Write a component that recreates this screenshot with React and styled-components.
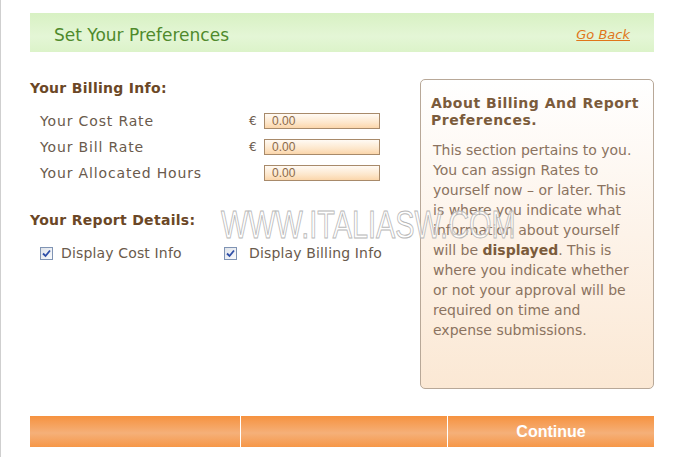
import React from 'react'
import styled, { createGlobalStyle } from 'styled-components'

const GlobalStyle = createGlobalStyle`
  html, body {
    margin: 0;
    padding: 0;
    background: #fff;
  }
  body {
    font-family: "DejaVu Sans", Verdana, sans-serif;
  }
`

const Page = styled.div`
  position: relative;
  box-sizing: border-box;
  width: 674px;
  height: 457px;
  border-left: 1px solid #cfcfcf;
  padding: 13px 20px 0 29px;
  overflow: hidden;
`

const Header = styled.div`
  box-sizing: border-box;
  height: 39px;
  display: flex;
  align-items: center;
  justify-content: space-between;
  padding: 4px 24px 0;
  background: linear-gradient(to bottom, #d8f1c3 0%, #e4f6d6 60%, #dcf3c9 100%);
`

const Title = styled.h1`
  margin: 0;
  font-size: 17px;
  font-weight: normal;
  color: #4f8a2c;
`

const BackLink = styled.a`
  font-size: 13px;
  font-style: italic;
  color: #e0761a;
  text-decoration: underline;
  cursor: pointer;
`

const Body = styled.div`
  display: flex;
  justify-content: space-between;
  margin-top: 27px;
`

const LeftCol = styled.div`
  width: 370px;
  padding-top: 1px;
`

const SectionTitle = styled.h2`
  margin: ${p => p.$top || 0}px 0 0;
  font-size: 14px;
  font-weight: bold;
  letter-spacing: 0.3px;
  line-height: 16px;
  color: #6b4726;
`

const Rows = styled.div`
  margin-top: 12px;
  padding-left: 10px;
`

const Row = styled.div`
  display: grid;
  grid-template-columns: 209px 15px 116px;
  align-items: center;
  height: 26px;
`

const Label = styled.span`
  font-size: 14px;
  letter-spacing: 0.85px;
  color: #6a5a4c;
`

const Currency = styled.span`
  font-size: 12px;
  color: #6a5a4c;
`

const Input = styled.input`
  box-sizing: border-box;
  width: 116px;
  height: 16px;
  margin: 0;
  padding: 0 0 0 7px;
  border: 1px solid #a88a6a;
  background: linear-gradient(to bottom, #fffaf4 0%, #fde7cc 60%, #fbd6ab 100%);
  font-family: "Liberation Sans", Arial, sans-serif;
  font-size: 12px;
  color: #8a6a4a;
  outline: none;
`

const Checks = styled.div`
  display: flex;
  margin-top: 17px;
  padding-left: 10px;
`

const CheckItem = styled.label`
  display: flex;
  align-items: center;
  gap: ${p => p.$gap}px;
  width: ${p => p.$w}px;
  font-size: 14px;
  letter-spacing: 0.15px;
  color: #6a5a4c;
`

const Box = styled.span`
  box-sizing: border-box;
  width: 13px;
  height: 13px;
  border: 1px solid #8094b4;
  background: linear-gradient(135deg, #dfe3ea 0%, #fafbfd 100%);
  display: flex;
  align-items: center;
  justify-content: center;
`

const Panel = styled.div`
  box-sizing: border-box;
  width: 234px;
  height: 310px;
  border: 1px solid #b8a898;
  border-radius: 5px;
  padding: 15px 8px 0 10px;
  background: linear-gradient(to bottom, #ffffff 0%, #fdf3e9 50%, #fbe8d4 100%);
`

const PanelTitle = styled.h3`
  margin: 0;
  font-size: 14px;
  font-weight: bold;
  line-height: 17px;
  letter-spacing: 0.5px;
  color: #7b5b3b;
`

const PanelText = styled.p`
  width: 203px;
  margin: 11px 0 0 2px;
  font-size: 14px;
  line-height: 20px;
  color: #8b7360;

  b {
    color: #7b5b3b;
  }
`

const Footer = styled.div`
  display: grid;
  grid-template-columns: 210px 206px 1fr;
  gap: 1px;
  margin-top: 27px;
  height: 31px;
`

const FooterCell = styled.div`
  display: flex;
  align-items: center;
  justify-content: center;
  background: linear-gradient(to bottom, #f6923f 0%, #f5b079 55%, #f69748 100%);
  font-family: "Liberation Sans", Arial, sans-serif;
  font-size: 16px;
  font-weight: bold;
  color: #fff;
`

const Watermark = styled.div`
  position: absolute;
  left: 220px;
  top: 203px;
  width: 296px;
  font-family: "Liberation Sans", Arial, sans-serif;
  font-size: 39px;
  line-height: 44px;
  white-space: nowrap;
  color: rgba(255, 255, 255, 0.6);
  -webkit-text-stroke: 1px #b8b8b8;
  transform: scaleX(0.74);
  transform-origin: left center;
  pointer-events: none;
`

const Check = () => (
  <Box>
    <svg width="9" height="9" viewBox="0 0 9 9">
      <path d="M1 4.5 L3.5 7 L8 1.5" fill="none" stroke="#2f4fa8" strokeWidth="1.8" />
    </svg>
  </Box>
)

const rates = [
  { label: 'Your Cost Rate', euro: true },
  { label: 'Your Bill Rate', euro: true },
  { label: 'Your Allocated Hours', euro: false },
]

export default function App() {
  return (
    <Page>
      <GlobalStyle />
      <Header>
        <Title>Set Your Preferences</Title>
        <BackLink>Go Back</BackLink>
      </Header>
      <Body>
        <LeftCol>
          <SectionTitle>Your Billing Info:</SectionTitle>
          <Rows>
            {rates.map(r => (
              <Row key={r.label}>
                <Label>{r.label}</Label>
                <Currency>{r.euro ? '€' : ''}</Currency>
                <Input defaultValue="0.00" />
              </Row>
            ))}
          </Rows>
          <SectionTitle $top={26}>Your Report Details:</SectionTitle>
          <Checks>
            <CheckItem $w={184} $gap={8}><Check />Display Cost Info</CheckItem>
            <CheckItem $w={170} $gap={12}><Check />Display Billing Info</CheckItem>
          </Checks>
        </LeftCol>
        <Panel>
          <PanelTitle>About Billing And Report Preferences.</PanelTitle>
          <PanelText>
            This section pertains to you. You can assign Rates to yourself now – or later. This is where you indicate what information about yourself will be <b>displayed</b>. This is where you indicate whether or not your approval will be required on time and expense submissions.
          </PanelText>
        </Panel>
      </Body>
      <Footer>
        <FooterCell />
        <FooterCell />
        <FooterCell>Continue</FooterCell>
      </Footer>
      <Watermark>WWW.ITALIASW.COM</Watermark>
    </Page>
  )
}
